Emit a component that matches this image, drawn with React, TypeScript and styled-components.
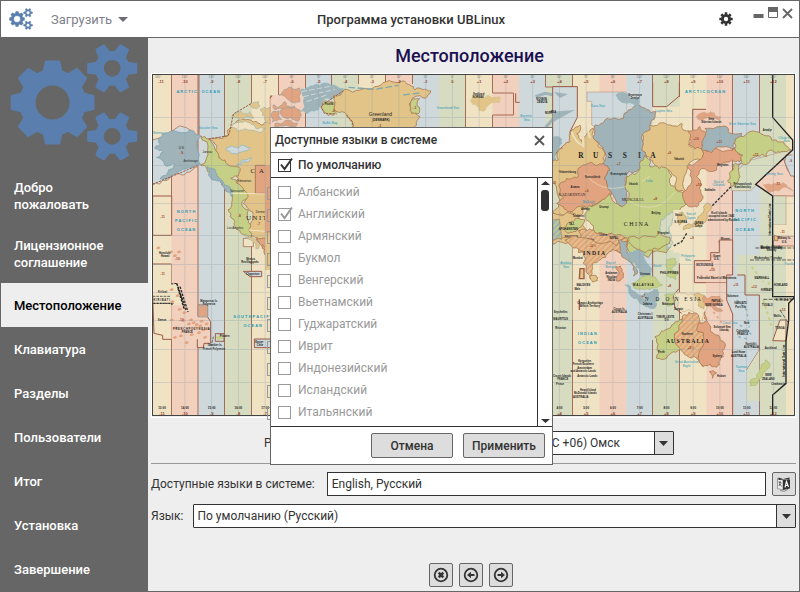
import React, { useState } from 'react';
import styled, { createGlobalStyle, css } from 'styled-components';

const ink = '#333333';
const frame = '#666666';
const panel = '#eeeeee';
const control = '#dddddd';
const steel = '#5a7fae';

const GlobalStyle = createGlobalStyle`
  *, *::before, *::after { box-sizing: border-box; }
  body { margin: 0; background: ${panel}; }
  body, button, input, select {
    font-family: Roboto, "Noto Sans", "Liberation Sans", sans-serif;
    font-size: 12px;
    color: ${ink};
  }
  button { padding: 0; cursor: pointer; }
`;

/* ---------- gears ---------- */

function gearPath(cx: number, cy: number, teeth: number, outer: number, root: number, hole: number, top: number, base: number, turn = 0) {
  const at = (r: number, deg: number) => {
    const a = ((deg + turn) * Math.PI) / 180;
    return `${(cx + r * Math.cos(a)).toFixed(2)} ${(cy + r * Math.sin(a)).toFixed(2)}`;
  };
  let d = '';
  for (let i = 0; i < teeth; i++) {
    const m = (360 / teeth) * i;
    d += `${i ? `A${root} ${root} 0 0 1 ` : 'M'}${at(root, m - base)}L${at(outer, m - top)}L${at(outer, m + top)}L${at(root, m + base)}`;
  }
  d += `A${root} ${root} 0 0 1 ${at(root, -base)}Z`;
  d += `M${cx - hole} ${cy}a${hole} ${hole} 0 1 0 ${hole * 2} 0a${hole} ${hole} 0 1 0 ${-hole * 2} 0Z`;
  return d;
}

const Gears = ({ width, height }: { width: number; height: number }) => (
  <svg width={width} height={height} viewBox="9 43 130 119" aria-hidden="true">
    <g fill={steel} stroke={steel} strokeWidth="2.4" strokeLinejoin="round" fillRule="evenodd">
      <path d={gearPath(52.6, 102.5, 8, 41.2, 32, 18.2, 9, 16)} />
      <path d={gearPath(112.2, 68.3, 6, 24.2, 16.2, 9.6, 10, 19)} />
      <path d={gearPath(112.2, 136.4, 6, 24.2, 16.2, 9.6, 10, 19)} />
    </g>
  </svg>
);

/* ---------- time zone map ---------- */

const sea = { beige: '#f0e3c4', pink: '#f1d0bd', blue: '#cfd9db', green: '#d7dcc0' };
const land = { gold: '#e2c488', orange: '#e2a480', slate: '#9fb3b9', green: '#c5cf85' };
const rust = '#9a5a45';
const aqua = '#2a9bb5';

type Pt = [number, number];

function jag(a: Pt, b: Pt, depth: number): Pt[] {
  const dx = b[0] - a[0];
  const dy = b[1] - a[1];
  if (depth === 0 || Math.hypot(dx, dy) < 9) return [b];
  const seed = Math.sin((a[0] + b[0]) * 12.9898 + (a[1] + b[1]) * 78.233) * 43758.5453;
  const k = (seed - Math.floor(seed) - 0.5) * 0.5;
  const flip = dx + dy * 0.37 > 0 ? 1 : -1;
  const m: Pt = [(a[0] + b[0]) / 2 - dy * k * flip, (a[1] + b[1]) / 2 + dx * k * flip];
  return [...jag(a, m, depth - 1), ...jag(m, b, depth - 1)];
}

function coast(text: string) {
  const pts = text.trim().split(/\s+/).map((p) => p.split(',').map(Number) as Pt);
  const out: Pt[] = [pts[0]];
  pts.forEach((p, i) => out.push(...jag(p, pts[(i + 1) % pts.length], 3)));
  return 'M' + out.map((p) => `${p[0].toFixed(1)} ${p[1].toFixed(1)}`).join('L') + 'Z';
}

const Land = ({ c, p, edge = '#a87850' }: { c: string; p: string; edge?: string }) => (
  <path d={coast(p)} fill={c} stroke={edge} strokeWidth="2.4" strokeLinejoin="round" />
);

const Tile = ({ x, y, children }: { x: number; y: number; children: React.ReactNode }) => (
  <g transform={`translate(${x} ${y}) scale(0.33333)`}>{children}</g>
);

type Label = [number, number, string];

const Labels = ({ items, fill = '#222', size = 12, serif = false, light = false }: { items: Label[]; fill?: string; size?: number; serif?: boolean; light?: boolean }) => (
  <g
    fill={fill}
    fontSize={size}
    fontWeight={light ? 400 : 700}
    textAnchor="middle"
    fontFamily={serif ? '"Liberation Serif", serif' : '"Liberation Sans", sans-serif'}
  >
    {items.map(([x, y, t]) => (
      <text key={`${x}-${y}`} x={x} y={y}>{t}</text>
    ))}
  </g>
);

const bandColors = [sea.pink, sea.blue, sea.green, sea.beige];
const bands = Array.from({ length: 23 }, (_, i) => ({ x: 171.5 + i * 26.75, c: bandColors[i % 4], hour: i - 10 }));

const MapSvg = styled.svg`
  display: block;
  width: 100%;
  height: auto;
  overflow: visible;
`;

const WorldMap = () => (
  <MapSvg viewBox="152 74 643 343" role="img" aria-label="Карта часовых поясов">
    <defs>
      <pattern id="half" width="12" height="12" patternUnits="userSpaceOnUse" patternTransform="rotate(45)">
        <rect width="12" height="12" fill={land.orange} />
        <rect width="5" height="12" fill={land.gold} />
      </pattern>
      <pattern id="halfBlue" width="12" height="12" patternUnits="userSpaceOnUse" patternTransform="rotate(45)">
        <rect width="12" height="12" fill={land.slate} />
        <rect width="5" height="12" fill={land.green} />
      </pattern>
      <clipPath id="sheet"><rect x="152" y="74" width="643" height="342" /></clipPath>
    </defs>
    <g clipPath="url(#sheet)">
      <rect x="152" y="74" width="643" height="342" fill={sea.beige} />
      {bands.map((b) => <rect key={b.x} x={b.x} y="74" width="27" height="342" fill={b.c} />)}
      <rect x="786" y="74" width="9" height="342" fill={sea.beige} />

      <g stroke={rust} strokeWidth="1" opacity="0.85">
        <path d="M171.5 74V196M171.5 264V416M198 74V416M199 74V135M224.500 74V416M251.500 74V104M251.500 235V416" fill="none" />
        <path d="M572.500 74V87M572.500 244V416M679.500 74V97M652.500 340V416M732.500 74V275M759.500 74V137M759.500 348V416M679.500 265V416M652.500 74V106" fill="none" />
        <path d="M278.500 74V96H270M305.500 74V127M331.500 74V88M358.500 74V84M385.500 74V84M412.500 74V84M465.500 74V127M492.500 74V93H513.500V115H492.500V127M545.500 74V87H572" fill="none" />
      </g>

      {/* north-west America and the eastern Pacific */}
      <Tile x={150} y={70}>
        <path d="M8 378H65V496H8Z" fill={sea.beige} stroke={rust} strokeWidth="3" />
        <Land c={sea.blue} p="8,210 140,196 142,290 90,312 45,332 8,342" />
        <Land c={land.slate} edge="#7ba3b2" p="25,207 40,190 65,183 90,188 140,195 152,200 152,285 130,290 100,298 65,316 30,325 55,300 75,284 45,286 35,270 20,262 40,246 15,236 30,224" />
        <Land c={land.gold} p="175,207 215,205 235,195 250,162 300,150 335,165 372,150 372,540 345,540 320,515 300,490 295,470 295,415 280,400 290,385 262,340 240,290 200,245" />
        <Land c={land.green} p="152,197 175,207 190,225 200,245 225,270 240,288 265,290 265,318 242,325 270,345 290,385 275,400 295,420 295,480 305,500 285,495 255,470 240,440 245,400 245,370 215,345 195,315 170,295 152,285" />
        <Land c={land.slate} edge="#7ba3b2" p="172,290 195,298 215,330 240,352 245,380 222,352 195,330" />
        <Land c={land.gold} edge="#a8b9a8" p="245,142 262,124 300,125 310,145 270,152" />
        <Land c={land.gold} edge="#a8b9a8" p="300,100 325,95 330,108 310,115" />
        <Land c={land.gold} edge="#a8b9a8" p="330,118 372,112 372,170 345,150" />
        <Land c={sea.blue} edge="#8fb7ba" p="228,238 262,234 284,228 300,232 276,246 245,252" />
        <Land c={sea.blue} edge="#8fb7ba" p="258,285 275,270 305,262 296,275 268,284" />
        <Land c={sea.beige} edge="#a8b9a8" p="245,168 300,158 345,175 300,180 262,182" />
        <path d="M316 286H372V370H316Z" fill={land.orange} stroke={rust} strokeWidth="2" />
        <path d="M361 80H372V163H361Z" fill={sea.pink} stroke={rust} strokeWidth="3" />
        <path d="M245 370L361 372M295 480L345 484" stroke="#f4e5c5" strokeWidth="3" fill="none" />
        <path d="M8 343L142 287M176 207L235 197L240 180L250 132L305 100" stroke={rust} strokeWidth="3" strokeDasharray="7 3" fill="none" />
        <path d="M280 505H310V530H280Z" fill={sea.beige} stroke={rust} strokeWidth="2" />
        <Land c={land.orange} p="335,515 350,505 372,520 372,540 345,540" />
        <Labels fill={aqua} size={12} items={[[110, 68, 'A R C T I C'], [182, 68, 'O C E A N'], [108, 428, 'N O R T H'], [108, 455, 'P A C I F I C'], [108, 482, 'O C E A N']]} />
        <Labels fill={aqua} size={10} light items={[[174, 178, 'Beaufort Sea'], [24, 192, 'Bering']]} />
        <Labels size={9} light items={[[95, 236, 'U.S.'], [122, 275, 'Anchorage'], [172, 250, 'Juneau'], [283, 335, 'Edmonton'], [262, 367, 'Vancouver'], [255, 478, 'Los Angeles'], [332, 430, 'Denver']]} />
        <Labels size={20} serif light items={[[308, 309, 'C'], [334, 309, 'A'], [328, 449, 'U N I T E']]} />
        <Labels size={10} fill="#a0482c" items={[[95, 252, '-9'], [38, 443, '-11'], [268, 440, '-8'], [326, 464, '-7']]} />
      </Tile>

      {/* south Pacific */}
      <Tile x={150} y={240}>
        <path d="M8 72H64V132H8Z" fill={sea.beige} stroke="none" />
        <path d="M64 132L80 130L112 220H80L64 190H8" fill={sea.beige} stroke="#222" strokeWidth="3" strokeDasharray="6 3" />
        <path d="M64 192V298H142V323H160L182 310V245L172 230H144V195H64Z" fill={sea.pink} />
        <path d="M8 72H64M8 168L12 280L38 286V298H64M142 298V323H160L162 310H182V245L172 230H144V195H173V230M196 281H222V304H196Z" stroke={rust} strokeWidth="3" fill="none" />
        <path d="M146 197H172V230H146Z" fill={land.orange} stroke={land.slate} strokeWidth="2" />
        <path d="M313 297H372V323H313ZM280 94H335V110H300Z" fill={sea.blue} stroke={rust} strokeWidth="3" />
        <path d="M80 130L108 212M90 140L114 216M84 146L102 206" stroke="#222" strokeWidth="4" strokeDasharray="7 4" />
        <path d="M8 169H60M8 190H72M190 290L184 318" stroke="#222" strokeWidth="2" strokeDasharray="8 3" />
        <g fill={land.orange}>
          {[[20, 22], [58, 34], [82, 34], [70, 45], [60, 147], [78, 165], [62, 183], [84, 206], [98, 216], [95, 240], [118, 238], [126, 246], [135, 252], [112, 250], [146, 256], [156, 268], [168, 264], [60, 238], [72, 262], [88, 286], [105, 306], [70, 290], [120, 282], [142, 276], [160, 290], [150, 242], [130, 262], [165, 250]].map(([x, y]) => (
            <path key={`${x}-${y}`} d={`M${x} ${y}l7 -3l5 5l-6 4l-7 -1z`} />
          ))}
        </g>
        <Land c={land.green} edge={land.green} p="200,290 215,285 218,296 204,300" />
        <Land c={land.gold} edge="#a8b9a8" p="285,-8 308,-8 325,26 318,26" />
        <Land c={land.orange} p="320,-8 372,-8 372,55 345,45 350,22 328,10" />
        <Labels fill={aqua} size={12} items={[[312, 234, 'S O U T H  P A C I F I C'], [308, 260, 'O C E A N']]} />
        <Labels size={8} items={[[44, 42, 'Honolulu'], [46, 52, 'Hawaii'], [177, 185, 'Marquesas Is.'], [177, 194, 'Polynesia'], [38, 158, 'Kiribati'], [36, 243, 'Samoa'], [195, 319, 'Gambier Is.'], [192, 329, 'French Polynesia'], [224, 290, 'Pitcairn'], [308, 105, 'Clipperton'], [302, 60, 'Mexico'], [300, 70, 'Revillagigedo'], [328, 308, 'Easter'], [330, 318, 'Chile'], [124, 269, 'F R E N C H   P O L Y N E S I A'], [112, 280, 'FRANCE'], [35, 184, 'K I R I B A T I']]} />
        <Labels size={10} fill="#a0482c" items={[[38, 104, '-11'], [82, 60, '-10'], [94, 242, '-10']]} />
      </Tile>

      {/* Canadian Arctic, Greenland and the north Atlantic */}
      <Tile x={265} y={70}>
        <path d="M16 88L24 75H107V172H16Z" fill={sea.pink} />
        {['42,75 60,58 104,54 105,95 70,90', '24,105 60,95 90,108 60,118 30,120', '45,125 85,112 105,120 104,150 70,146', '20,130 42,122 50,148 22,156', '30,160 60,152 98,160 90,172 30,172'].map((p) => <Land key={p} c={land.orange} edge="#a8a094" p={p} />)}
        <Land c={land.slate} edge="#8fb7ba" p="107,60 150,44 205,45 235,56 180,85 165,108 125,130 108,124" />
        <path d="M110 65L200 48M115 80L210 58M125 95L185 75" stroke="#cfd9db" strokeWidth="3" strokeDasharray="16 7" />
        <Land c={land.gold} p="205,78 240,58 330,50 400,38 435,45 450,60 497,62 480,85 440,90 440,130 465,140 455,165 445,175 265,175 262,155 245,135 215,125 210,98" />
        <path d="M250 52L330 58L400 46M415 75L470 68" stroke="#7fa9ae" strokeWidth="4" strokeDasharray="20 8" fill="none" />
        <Land c={land.green} p="168,112 185,93 208,98 215,125 205,136 178,126" />
        <Land c={land.green} p="441,90 464,86 462,130 441,130" />
        <Land c={land.gold} edge="#d8c694" p="615,92 650,80 690,84 705,98 672,104 655,124 635,108" />
        <Land c={land.gold} edge="#d8c694" p="682,84 706,82 704,95 690,96" />
        <path d="M245 135L262 155V172M235 62L168 108L178 130L215 132" stroke={rust} strokeWidth="3" strokeDasharray="7 3" fill="none" />
        <path d="M762 36H840V172H762Z" fill={sea.blue} />
        <path d="M752 70V97H764" fill="none" stroke={rust} strokeWidth="3" />
        <path d="M812 80L840 70L864 74M842 172L870 140" stroke={land.slate} strokeWidth="9" fill="none" />
        <Labels size={15} light items={[[346, 139, 'Greenland']]} />
        <Labels size={9} items={[[348, 153, '(DENMARK)']]} />
        <Labels size={8} items={[[192, 106, 'Pituffik'], [641, 75, 'Svalbard'], [640, 84, 'NORWAY'], [830, 90, 'NOVAYA'], [832, 99, 'ZEMLYA'], [854, 133, 'NORTH']]} />
        <Labels size={10} light fill={aqua} items={[[195, 162, 'Baffin Bay'], [549, 118, 'Greenland Sea'], [783, 141, 'Barents'], [785, 153, 'Sea']]} />
        <Labels size={10} fill="#a0482c" items={[[344, 170, '-3'], [450, 118, '-1'], [205, 125, '-4']]} />
        <path d="M0 285H5V172H0Z" fill={land.gold} />
        <path d="M0 172H16V285H0ZM0 490H16V600H0Z" fill={land.gold} />
        <path d="M0 285H16V490H0Z" fill={land.orange} />
      </Tile>

      {/* Asia */}
      <Tile x={550} y={70}>
        <path d="M8 50H82V142L60 185V215L25 240L8 265Z" fill={sea.blue} stroke={rust} strokeWidth="3" />
        <path d="M111 66H230V200H135V172L125 165V94H111Z" fill={sea.blue} stroke={rust} strokeWidth="1" />
        <path d="M230 38H308V110H318V180H230Z" fill={sea.blue} />
        <path d="M308 110H388V540H308Z" fill={sea.beige} />
        <path d="M308 38V110H350L388 78V38" fill={sea.green} stroke={rust} strokeWidth="3" />
        <path d="M8 125L75 120L20 150L8 158ZM12 66L54 72L30 84" fill={land.slate} />
        <Land c={land.slate} edge="#8fb7ba" p="8,205 26,200 25,240 18,270 8,272" />
        <path d="M388 110H468V182H428V118H388Z" fill={sea.beige} />
        <path d="M428 118H468V182H428Z" fill={sea.pink} />
        <path d="M468 118H428V182" fill="none" stroke={rust} strokeWidth="3" />
        <Land c={land.gold} p="8,275 25,270 25,240 60,215 65,180 90,165 95,215 110,195 130,175 135,210 160,235 165,280 185,330 180,390 85,440 40,435 8,425" />
        <path d="M65 185Q74 215 100 228L98 180L110 172L120 204" stroke="#eadfbe" strokeWidth="6" fill="none" />
        <Land c={land.orange} p="30,340 50,325 85,315 85,295 115,280 160,280 180,300 165,320 185,370 150,395 120,420 60,425 40,410 20,400 40,385 30,365" />
        <Land c={land.gold} p="300,165 340,158 395,160 400,180 420,185 415,225 455,235 450,270 415,290 410,370 380,360 355,300 320,290 290,260 275,240 280,205" />
        <Land c={land.slate} p="135,165 165,150 220,145 235,120 265,105 318,125 300,180 275,200 275,240 290,260 270,295 235,305 225,345 230,410 215,410 185,370 165,320 180,300 160,280 160,240 135,210" />
        <Land c={land.slate} edge="#8fb7ba" p="198,76 225,70 240,84 268,92 266,106 232,100 205,88" />
        <Land c={land.green} p="230,320 270,295 285,255 300,290 355,300 385,365 420,385 400,410 360,430 340,450 350,500 350,548 240,548 185,490 130,480 105,440 150,395 180,370 215,410 230,400" />
        <Land c={land.orange} p="415,185 450,170 470,190 455,225 470,245 520,245 555,235 578,260 570,275 545,270 500,300 440,320 455,345 455,390 430,410 405,400 410,360 410,290 450,270 455,235 418,225" />
        <Land c={land.slate} p="455,215 465,175 530,170 535,185 575,190 570,210 550,220 555,235 485,248 455,235" />
        <Land c={land.orange} edge="#d7a58b" p="440,138 470,130 512,140 505,150 450,150" />
        <path d="M585 275L725 238L602 362H545L540 320L575 290Z" fill={sea.green} stroke={rust} strokeWidth="1" />
        <Land c={land.green} p="555,215 580,200 640,195 665,210 700,215 722,240 700,245 660,240 650,260 600,275 575,280 570,320 545,350 538,310 575,275 578,255 555,235" />
        <path d="M617 343L700 264L712 300L733 322V378H668Z" fill={sea.pink} stroke={rust} strokeWidth="2" />
        <path d="M708 255H735V318H722L704 276Z" fill={sea.blue} stroke={rust} strokeWidth="2" />
        <path d="M728 240L725 300L735 300V200Z" fill={sea.blue} />
        <Land c={land.orange} edge="#d7a58b" p="640,345 680,338 712,352 728,362 690,360 650,358" />
        <Land c={sea.green} edge="#8fb7ba" p="345,440 368,425 370,520 352,540 342,500 330,475" />
        <path d="M370 420H468V548H370Z" fill={sea.beige} />
        <Land c={land.gold} edge="#b9a878" p="455,430 475,400 484,410 472,440 455,466 425,470 400,480 405,466 438,452" />
        <Land c={land.gold} edge="#b9a878" p="382,432 398,426 405,455 388,466" />
        <path d="M543 350L484 410M410 490L395 515L370 528" stroke="#333" strokeWidth="4" strokeDasharray="8 4" fill="none" />
        <Land c={land.gold} p="8,430 60,430 85,440 110,480 85,510 50,512 8,508" />
        <Land c={land.green} p="50,465 80,445 105,450 85,475 45,482" />
        <path d="M8 450L28 448L36 508L8 524Z" fill="url(#halfBlue)" stroke="#a87850" strokeWidth="2" />
        <path d={coast('85,482 130,480 185,490 232,520 230,548 85,548 90,510')} fill="url(#half)" stroke="#a87850" strokeWidth="2.400" />
        <path d="M275 335L300 318M240 395Q320 440 375 365M105 310Q150 370 225 350" stroke="#e9e3bd" strokeWidth="2" fill="none" />
        <path d="M668 378H708V465H668Z" fill={sea.green} stroke={rust} strokeWidth="1" />
        <path d="M668 498H735V528H668Z" fill={sea.pink} stroke={rust} strokeWidth="2" />
        <path d="M668 465H735V498H668Z" fill={sea.beige} />
        <path d="M672 495L684 500V512H674ZM516 526L534 520V536H518Z" fill={land.gold} stroke={rust} strokeWidth="2" />
        <path d="M668 13V142L728 210V240L617 343L668 378V540" stroke="#222" strokeWidth="4" fill="none" />
        <Labels size={22} serif items={[[93, 263, 'R'], [137, 263, 'U'], [180, 263, 'S'], [224, 263, 'S'], [268, 263, 'I'], [309, 263, 'A']]} />
        <Labels size={18} serif light items={[[258, 469, 'C H I N A']]} />
        <Labels size={12} serif light items={[[66, 379, 'KAZAKHSTAN'], [248, 393, 'MONGOLIA']]} />
        <Labels size={8} items={[[255, 79, 'Severnaya'], [255, 88, 'Zemlya'], [484, 151, 'New'], [484, 160, 'Siberian Islands'], [387, 269, 'Yakutsk'], [52, 310, 'Yekaterinburg'], [128, 323, 'Novosibirsk'], [206, 316, 'Krasnoyarsk'], [75, 354, 'Astana'], [250, 345, 'Irkutsk'], [518, 288, 'Magadan'], [480, 362, 'Sakhalin'], [578, 346, 'Petropavlovsk'], [578, 355, 'Kamchatskiy'], [162, 414, 'Urumqi'], [318, 431, 'Beijing'], [106, 421, 'Almaty'], [85, 442, 'Tashkent'], [446, 461, 'JAPAN'], [446, 471, 'Tokyo'], [386, 437, 'Seoul'], [392, 458, 'S. KOREA'], [340, 491, 'Shanghai'], [65, 465, 'TAJ.'], [55, 479, 'AFGHANISTAN'], [64, 505, 'PAKISTAN'], [160, 498, 'Lhasa'], [192, 508, 'NEPAL'], [190, 530, 'Kathmandu'], [122, 512, 'Delhi'], [122, 522, 'INDIA'], [296, 534, 'Guangzhou'], [348, 523, 'Taipei'], [526, 511, 'Minami'], [526, 521, 'Tori Shima'], [508, 432, 'Kuril islands'], [514, 442, 'occupied since 1945'], [518, 452, 'administered by Russia'], [664, 536, 'Monday / Sunday'], [703, 508, 'Midway Is.'], [703, 518, 'U.S.'], [10, 130, 'SEA'], [652, 184, 'Anadyr']]} />
        <Labels size={10} fill={aqua} light items={[[144, 110, 'Kara Sea'], [341, 127, 'Laptev Sea'], [578, 165, 'East Siberian Sea'], [506, 338, 'Sea of'], [506, 349, 'Okhotsk'], [673, 314, 'Bering Sea'], [703, 206, 'Chukchi'], [710, 217, 'Sea'], [298, 336, 'Lake'], [116, 400, 'Balkash'], [423, 434, 'Sea of'], [423, 446, 'Japan']]} />
        <Labels size={12} fill={aqua} items={[[465, 68, 'A R C T I C   O C E A N'], [584, 426, 'N O R T H'], [584, 454, 'P A C I F I C'], [584, 482, 'O C E A N']]} />
        <Labels size={10} fill="#a0482c" items={[[206, 285, '+7'], [358, 252, '+9'], [438, 209, '+10'], [508, 218, '+11'], [617, 257, '+12'], [110, 365, '+6'], [316, 389, '+8'], [446, 347, '+10'], [426, 508, '+9'], [12, 341, '+5'], [132, 535, '+5½'], [684, 345, '-11'], [698, 488, '-11'], [722, 276, '-9']]} />
        <text transform="translate(664 448) rotate(-90)" fontSize="9" fontWeight="700" textAnchor="middle" fontFamily="Liberation Sans">International Date Line</text>
      </Tile>

      {/* south Asia and Australia */}
      <Tile x={550} y={240}>
        <path d="M8 0H68V240H8Z" fill={sea.green} opacity="0.7" />
        <path d="M530 105H585V165H628V330L590 390V483H548V222L530 180Z" fill={sea.blue} />
        <path d="M562 45H628V165H585V105H562Z" fill={sea.green} />
        <path d="M628 165H585V105H562M628 330L590 390" stroke={rust} strokeWidth="3" fill="none" />
        <path d="M628 330V483H590V390Z" fill={sea.green} />
        <path d="M433 62H482V38H508V0H548V105H530V128H433Z" fill={sea.pink} stroke={rust} strokeWidth="3" />
        <path d="M468 128H530V180L548 222V300H468Z" fill={sea.pink} />
        <path d="M530 128V180L548 222V525M628 165V330M388 70V145L370 165L375 205L395 220M308 30V120" fill="none" stroke={rust} strokeWidth="3" />
        <Land c={land.gold} p="8,0 60,-8 70,12 40,8 8,14" />
        <path d={coast('45,0 90,-8 230,-8 232,40 200,30 178,35 148,60 128,85 120,115 100,70 85,28 68,22')} fill="url(#half)" stroke="#a87850" strokeWidth="2.400" />
        <Land c={land.gold} p="120,108 138,106 142,122 128,126" />
        <Land c={land.orange} p="198,80 211,78 211,122 198,122" />
        <Land c={land.slate} p="205,0 232,6 238,45 262,100 250,108 232,60 210,35" />
        <Land c={land.slate} edge="#8fb7ba" p="232,40 262,28 285,42 290,70 305,85 298,108 272,108 255,70 240,62" />
        <Land c={land.green} p="235,-8 360,-8 355,12 325,28 285,38 262,28 245,15" />
        <Land c={land.green} edge="#a9bd88" p="350,60 375,55 372,78 360,90 385,98 378,118 358,112" />
        <Land c={land.slate} edge="#8fb7ba" p="225,135 242,140 262,162 285,182 320,190 318,200 272,192 242,168" />
        <Land c={land.slate} edge="#8fb7ba" p="284,158 322,148 325,182 300,184" />
        <Land c={land.green} edge="#a9bd88" p="245,130 322,122 338,135 300,150 268,148" />
        <Land c={land.green} edge="#a9bd88" p="344,165 374,160 370,190 350,196" />
        <Land c={sea.beige} edge="#d0b98c" p="375,158 430,162 460,170 460,248 430,215 400,215 385,185" />
        <Land c={land.gold} edge="#b9a878" p="432,165 460,165 462,206 445,198" />
        <Land c={land.orange} edge="#c99478" p="462,168 520,182 510,196 490,195 518,212 498,212 470,200" />
        <Land c={land.green} p="315,290 345,270 365,255 397,235 397,330 350,355 320,355" />
        <path d={coast('397,228 440,220 443,275 460,278 460,380 435,350 397,335')} fill="url(#half)" stroke="#a87850" strokeWidth="2.400" />
        <Land c={land.orange} p="443,275 445,250 460,250 465,215 475,250 505,285 525,310 520,350 500,382 460,378 460,278" />
        <Land c={land.orange} p="478,395 500,398 487,415" />
        <Land c={land.green} edge="#a9bd88" p="600,426 628,395 645,360 660,375 640,398 625,425 600,438" />
        <g fill="none" stroke={land.green} strokeWidth="6" strokeDasharray="9 9">
          <path d="M640 180L665 260M645 150L660 125M605 80L640 125" />
        </g>
        <g fill="none" stroke="#8fb7c9" strokeWidth="5" strokeDasharray="8 10">
          <path d="M560 180L590 210L598 262M570 255L612 290M250 35L300 90M565 290L600 300" />
        </g>
        <g fill="none" stroke={land.orange} strokeWidth="5" strokeDasharray="8 9">
          <path d="M490 215L540 280M450 108L545 112M485 45L488 90" />
        </g>
        <path d="M668 302L690 240H708V303Z" fill={sea.beige} stroke={rust} strokeWidth="3" />
        <path d="M88 178V210M90 86H102V116H88Z" stroke={rust} strokeWidth="4" fill={land.gold} />
        <path d="M668 0V170H735M733 172L716 190V240L708 303V430L668 465V525" stroke="#222" strokeWidth="4" fill="none" />
        <path d="M616 24H735M600 60H735M640 178H735M690 210L716 250" stroke="#222" strokeWidth="2" strokeDasharray="12 4" fill="none" />
        <Labels size={17} serif items={[[132, 45, 'I N D I A'], [412, 310, 'A U S T R A L I A']]} />
        <Labels size={16} serif light items={[[290, 184, 'N'], [322, 184, 'D'], [352, 184, 'O'], [380, 184, 'N'], [408, 184, 'E'], [436, 184, 'S I A']]} />
        <Labels size={9} items={[[358, 102, 'PHILIPPINES'], [280, 138, 'M A L A Y S I A']]} />
        <Labels size={8} items={[[100, 138, 'MALDIVES'], [120, 191, 'Chagos Archipelago'], [120, 201, 'British Territory'], [184, 103, 'Andaman'], [184, 113, 'Nicobar'], [184, 123, 'INDIA'], [208, 210, 'Cocos Is.'], [208, 220, 'AUSTRALIA'], [286, 226, 'Christmas I.'], [286, 236, 'AUSTRALIA'], [285, 104, 'Vietnam'], [292, 196, 'Jakarta'], [346, 233, 'TIMOR-LESTE'], [350, 243, 'Dili'], [354, 196, 'Makassar'], [386, 211, 'Darwin'], [412, 286, 'Northern'], [334, 340, 'Perth'], [502, 352, 'Sydney'], [514, 412, 'Hobart'], [498, 187, 'PAPUA'], [492, 197, 'NEW GUINEA'], [516, 264, 'Solomon Sea'], [522, 274, 'Islands'], [548, 170, 'Solomon'], [572, 193, 'VANUATU'], [572, 203, 'Port-Vila'], [590, 253, 'New'], [578, 276, 'Caledonia'], [578, 286, 'FRANCE'], [500, 50, 'Guam'], [500, 60, 'U.S.'], [464, 78, 'MICRONESIA'], [500, 118, 'Federated States of Micronesia'], [566, 340, 'Lord Howe'], [566, 350, 'AUSTRALIA'], [604, 314, 'Norfolk I.'], [604, 324, 'AUSTRALIA'], [662, 328, 'Auckland'], [655, 409, 'NEW'], [655, 419, 'ZEALAND'], [686, 435, 'Chatham Is.'], [104, 366, 'Kerguelen'], [100, 376, 'French Southern'], [104, 387, 'Amsterdam'], [100, 397, 'and Antarctic Lands'], [112, 410, 'Antarctic Lands'], [114, 453, 'Heard Island'], [106, 463, 'McDonald Islands'], [92, 474, 'AUSTRALIA'], [36, 410, 'Crozet Islands'], [38, 420, 'FRANCE'], [30, 434, 'Prince'], [32, 220, 'Seychelles'], [32, 240, 'MAURITIUS'], [32, 266, 'Réunion'], [636, 118, 'MARSHALL'], [650, 152, 'KIRIBATI'], [692, 137, 'HOWLAND'], [652, 198, 'TUVALU'], [682, 230, 'Wallis'], [690, 268, 'TONGA'], [664, 24, 'Monday / Sunday'], [664, 34, 'Sunday'], [654, 58, 'Wednesday / Tuesday'], [702, 182, 'K I R I B A T I'], [83, 58, 'Mumbai'], [82, 150, 'Male']]} />
        <Labels size={10} fill={aqua} light items={[[48, 73, 'Arabian'], [48, 85, 'Sea'], [182, 72, 'Bay of'], [182, 84, 'Bengal'], [414, 52, 'Philippine'], [414, 64, 'Sea'], [322, 80, 'South'], [410, 370, 'Great Australian'], [410, 381, 'Bight'], [574, 384, 'Tasman'], [574, 395, 'Sea'], [540, 252, 'Coral Sea'], [718, 76, 'Pacific']]} />
        <Labels size={12} fill={aqua} items={[[112, 285, 'I N D I A N'], [112, 311, 'O C E A N']]} />
        <Labels size={10} fill="#a0482c" items={[[358, 140, '+8'], [422, 326, '+9½'], [486, 92, '+10'], [558, 137, '+11'], [612, 143, '+12'], [128, 22, '+5½'], [280, 170, '+7'], [698, 212, '+13']]} />
        <text transform="translate(704 362) rotate(-90)" fontSize="9" fontWeight="700" textAnchor="middle" fontFamily="Liberation Sans">International Date Line</text>
      </Tile>

      <g stroke="#8897a5" strokeWidth="1" opacity="0.28">
        {[117, 165, 203, 235, 264, 292, 320, 349, 382].map((y) => <path key={y} d={`M152 ${y}.500H795`} />)}
        {bands.map((b) => <path key={b.x} d={`M${b.x + 13.4} 74V416`} />)}
      </g>
      <Labels size={4} fill="#93402a" items={[[161, 83, '-11'], ...bands.map((b) => [b.x + 13.4, 83, b.hour > 0 ? `+${b.hour}` : `${b.hour}`] as Label)]} />
      <Labels size={3} light fill="#777" items={[[158, 78, '165°'], ...bands.map((b) => [b.x + 13.4, 78, `${Math.abs(b.hour * 15)}°`] as Label)]} />
      <Labels size={3} fill="#222" items={[[162, 409, '13:00'], ...bands.map((b) => [b.x + 13.4, 409, `${(b.hour + 24) % 24}:00`] as Label)]} />
      <Labels size={4} fill="#93402a" items={[[162, 415, '-11'], ...bands.map((b) => [b.x + 13.4, 415, b.hour > 0 ? `+${b.hour}` : `${b.hour}`] as Label)]} />
    </g>
    <rect x="152.500" y="74.500" width="642" height="341" fill="none" stroke="#444" strokeWidth="1" />
    <g fill="none" stroke="#999" strokeWidth="1">
      {Array.from({ length: 11 }, (_, i) => <rect key={i} x="267.500" y={187.5 + i * 22} width="12" height="12" />)}
    </g>
  </MapSvg>
);

/* ---------- window ---------- */

const Window = styled.div`
  position: relative;
  display: flex;
  flex-direction: column;
  min-height: 100vh;
  border: 1px solid ${frame};
  background: ${panel};
`;

const TitleBar = styled.header`
  display: grid;
  grid-template-columns: 1fr auto 1fr;
  align-items: center;
  height: 37px;
  padding: 0 6px 0 8px;
  background: #fff;
  border-bottom: 1px solid ${frame};
`;

const TitleStart = styled.div`
  display: flex;
  align-items: center;
  gap: 18px;
`;

const LoadButton = styled.button`
  display: flex;
  align-items: center;
  gap: 6px;
  border: 0;
  background: none;
  color: #807f89;
  font-size: 13px;
`;

const AppTitle = styled.h1`
  margin: 0;
  padding-left: 20px;
  font-size: 13px;
  font-weight: 500;
`;

const TitleEnd = styled.div`
  display: flex;
  align-items: center;
  justify-content: flex-end;
  gap: 19px;
`;

const WindowButtons = styled.div`
  display: flex;
  gap: 4px;
  padding-bottom: 12px;
`;

const BareButton = styled.button`
  display: grid;
  place-items: center;
  border: 0;
  background: none;
`;

const Body = styled.div`
  display: flex;
  flex: 1;
`;

const Sidebar = styled.nav`
  display: flex;
  flex-direction: column;
  flex: 0 0 147px;
  min-width: 0;
  background: ${frame};
`;

const Brand = styled.div`
  height: 129px;
  padding: 5px 0 0 8px;
`;

const Step = styled.button<{ $current?: boolean }>`
  min-height: 44px;
  padding: 12px 24px 12px 13px;
  border: 0;
  background: ${(p) => (p.$current ? panel : 'transparent')};
  color: ${(p) => (p.$current ? '#000' : '#fff')};
  font-size: 13px;
  font-weight: 500;
  line-height: 17px;
  text-align: left;
`;

const Main = styled.main`
  display: flex;
  flex-direction: column;
  flex: 1;
  min-width: 0;
  padding: 0 3px 4px;
`;

const Heading = styled.h2`
  margin: 0;
  padding: 0 8px 0 0;
  color: #1b1050;
  font-size: 18px;
  font-weight: 500;
  line-height: 35px;
  text-align: center;
`;

const MapFrame = styled.div`
  border: 1px solid #fff;
`;

const ZoneRow = styled.div`
  display: flex;
  align-items: center;
  justify-content: center;
  gap: 8px;
  margin: 13px 0 8px;
  padding-right: 9px;
`;

const Fields = styled.div`
  display: flex;
  flex-direction: column;
  gap: 8px;
  padding-top: 8px;
  border-top: 1px solid #999;
`;

const FieldRow = styled.div`
  display: flex;
  align-items: center;
`;

const FieldLabel = styled.label<{ $space?: number }>`
  margin-right: ${(p) => p.$space ?? 0}px;
  white-space: nowrap;
`;

const TextBox = styled.input`
  flex: 1;
  min-width: 0;
  height: 24px;
  margin-right: 6px;
  padding: 0 4px;
  border: 1px solid ${ink};
  background: #fff;
`;

const SelectBox = styled.div<{ $width?: number }>`
  display: flex;
  height: 24px;
  border: 1px solid ${ink};
  border-radius: 1px;
  background: #fff;
  ${(p) => (p.$width ? css`flex: 0 0 ${p.$width}px;` : css`flex: 1;`)}

  select {
    flex: 1;
    min-width: 0;
    padding: 0 3px;
    border: 0;
    appearance: none;
    background: none;
  }
`;

const SelectArrow = styled.span`
  display: grid;
  place-items: center;
  flex: 0 0 19px;
  border-left: 1px solid ${ink};
  background: ${control};
  pointer-events: none;
`;

const IconButton = styled.button`
  display: grid;
  place-items: center;
  width: 24px;
  height: 24px;
  border: 1px solid ${frame};
  border-radius: 2px;
  background: ${control};
`;

const Pager = styled.div`
  display: flex;
  justify-content: center;
  gap: 6px;
  margin-top: auto;
  padding-right: 5px;
`;

const Triangle = ({ color = ink, up = false, width = 9, height = 5 }: { color?: string; up?: boolean; width?: number; height?: number }) => (
  <svg width={width} height={height} viewBox="0 0 10 5" preserveAspectRatio="none" aria-hidden="true">
    <path d={up ? 'M0 5L5 0L10 5Z' : 'M0 0H10L5 5Z'} fill={color} />
  </svg>
);

const Select = ({ id, value, width }: { id: string; value: string; width?: number }) => (
  <SelectBox $width={width}>
    <select id={id} defaultValue={value}><option>{value}</option></select>
    <SelectArrow><Triangle /></SelectArrow>
  </SelectBox>
);

/* ---------- language dialog ---------- */

const Dialog = styled.section`
  position: absolute;
  top: 126px;
  left: 269px;
  width: 283px;
  border: 1px solid ${frame};
  background: #fff;
`;

const DialogTitle = styled.div`
  display: flex;
  align-items: center;
  justify-content: space-between;
  height: 25px;
  padding: 0 7px 0 4px;
  border-bottom: 1px solid ${frame};

  h3 { margin: 0; font-size: 12px; font-weight: 500; }
`;

const DefaultRow = styled.div`
  display: flex;
  align-items: center;
  height: 25px;
  padding-left: 7px;
  border-bottom: 1px solid ${ink};
`;

const CheckLabel = styled.label<{ $muted?: boolean }>`
  display: flex;
  align-items: center;
  gap: 4px;
  height: 22px;
  color: ${(p) => (p.$muted ? '#999' : ink)};
  font-weight: ${(p) => (p.$muted ? 400 : 500)};
`;

const CheckCell = styled.span`
  display: grid;
  place-items: center start;
  width: 16px;

  > * { grid-area: 1 / 1; }

  input {
    width: 13px;
    height: 13px;
    margin: 0;
    border: 1px solid currentColor;
    appearance: none;
    background: #fff;
    color: inherit;
  }

  svg { pointer-events: none; }
`;

const ListArea = styled.div`
  display: flex;
  height: 249px;
  border-bottom: 1px solid ${ink};
`;

const LanguageList = styled.ul`
  flex: 1;
  margin: 0;
  padding: 3px 0 3px 7px;
  list-style: none;
  overflow: hidden;
`;

const ScrollTrack = styled.div`
  display: flex;
  flex-direction: column;
  align-items: center;
  justify-content: space-between;
  width: 15px;
  padding: 3px 0;
  border-left: 1px solid ${ink};
`;

const ScrollTop = styled.div`
  display: flex;
  flex-direction: column;
  align-items: center;
  gap: 5px;
`;

const ScrollThumb = styled.div`
  width: 8px;
  height: 21px;
  border-radius: 3px;
  background: ${ink};
`;

const DialogFooter = styled.div`
  display: flex;
  justify-content: flex-end;
  gap: 10px;
  padding: 6px 7px;
`;

const DialogButton = styled.button`
  width: 82px;
  height: 25px;
  border: 1px solid ${frame};
  border-radius: 2px;
  background: ${control};
  font-weight: 500;
`;

const Check = ({ text, muted, defaultOn, onToggle }: { text: string; muted?: boolean; defaultOn?: boolean; onToggle?: (on: boolean) => void }) => {
  const [on, setOn] = useState(!!defaultOn);
  return (
    <CheckLabel $muted={muted}>
      <CheckCell>
        <input
          type="checkbox"
          checked={on}
          disabled={muted}
          onChange={() => { setOn(!on); onToggle?.(!on); }}
        />
        {on && (
          <svg width="16" height="16" viewBox="0 0 16 16" aria-hidden="true">
            <path d="M3 7.500L6.500 12L14 1.500" fill="none" stroke="currentColor" strokeWidth="2" />
          </svg>
        )}
      </CheckCell>
      {text}
    </CheckLabel>
  );
};

const Cross = ({ color = '#555', size = 11 }: { color?: string; size?: number }) => (
  <svg width={size} height={size} viewBox="0 0 11 11" aria-hidden="true">
    <path d="M1 1L10 10M10 1L1 10" stroke={color} strokeWidth="1.800" />
  </svg>
);

const Round = ({ children }: { children: React.ReactNode }) => (
  <svg width="16" height="16" viewBox="0 0 16 16" fill="none" stroke={ink} strokeWidth="1.800" aria-hidden="true">
    <circle cx="8" cy="8" r="6.300" />
    {children}
  </svg>
);

const languages = ['Албанский', 'Английский', 'Армянский', 'Букмол', 'Венгерский', 'Вьетнамский', 'Гуджаратский', 'Иврит', 'Индонезийский', 'Исландский', 'Итальянский'];
const steps = ['Добро пожаловать', 'Лицензионное соглашение', 'Местоположение', 'Клавиатура', 'Разделы', 'Пользователи', 'Итог', 'Установка', 'Завершение'];

const LanguageDialog = () => {
  const [locked, setLocked] = useState(true);
  return (
    <Dialog role="dialog" aria-labelledby="languages-title">
      <DialogTitle>
        <h3 id="languages-title">Доступные языки в системе</h3>
        <BareButton aria-label="Закрыть"><Cross /></BareButton>
      </DialogTitle>
      <DefaultRow><Check text="По умолчанию" defaultOn onToggle={setLocked} /></DefaultRow>
      <ListArea>
        <LanguageList>
          {languages.map((name) => (
            <li key={name}><Check text={name} muted={locked} defaultOn={name === 'Английский'} /></li>
          ))}
        </LanguageList>
        <ScrollTrack>
          <ScrollTop><Triangle up height={4} /><ScrollThumb /></ScrollTop>
          <Triangle height={4} />
        </ScrollTrack>
      </ListArea>
      <DialogFooter>
        <DialogButton>Отмена</DialogButton>
        <DialogButton>Применить</DialogButton>
      </DialogFooter>
    </Dialog>
  );
};

export default function App() {
  return (
    <>
      <GlobalStyle />
      <Window>
        <TitleBar>
          <TitleStart>
            <Gears width={24} height={22} />
            <LoadButton>Загрузить<Triangle color="#6f6e78" width={10} /></LoadButton>
          </TitleStart>
          <AppTitle>Программа установки UBLinux</AppTitle>
          <TitleEnd>
            <BareButton aria-label="Настройки">
              <svg width="16" height="16" viewBox="0 0 16 16" aria-hidden="true">
                <path d={gearPath(8, 8, 8, 6.8, 5, 2.2, 11, 14)} fill={ink} fillRule="evenodd" />
              </svg>
            </BareButton>
            <WindowButtons>
              <BareButton aria-label="Свернуть">
                <svg width="11" height="12" viewBox="0 0 11 12"><path d="M0.500 7H10.500V11H0.500Z" fill={frame} /></svg>
              </BareButton>
              <BareButton aria-label="Развернуть">
                <svg width="10" height="12" viewBox="0 0 10 12">
                  <path d="M0.500 1H9.500V10.500H0.500Z" fill="#fff" stroke={frame} />
                  <path d="M0 0H10V5H0Z" fill={frame} />
                </svg>
              </BareButton>
              <BareButton aria-label="Закрыть окно"><Cross color={frame} /></BareButton>
            </WindowButtons>
          </TitleEnd>
        </TitleBar>
        <Body>
          <Sidebar>
            <Brand><Gears width={130} height={119} /></Brand>
            {steps.map((s) => <Step key={s} $current={s === 'Местоположение'}>{s}</Step>)}
          </Sidebar>
          <Main>
            <Heading>Местоположение</Heading>
            <MapFrame><WorldMap /></MapFrame>
            <ZoneRow>
              <FieldLabel htmlFor="region">Регион:</FieldLabel>
              <Select id="region" value="Азия" width={168} />
              <FieldLabel htmlFor="zone">Зона:</FieldLabel>
              <Select id="zone" value="(UTC +06) Омск" width={145} />
            </ZoneRow>
            <Fields>
              <FieldRow>
                <FieldLabel htmlFor="languages" $space={12}>Доступные языки в системе:</FieldLabel>
                <TextBox id="languages" defaultValue="English, Русский" />
                <IconButton aria-label="Выбрать языки">
                  <svg width="16" height="16" viewBox="0 0 16 16" aria-hidden="true">
                    <path d="M1.500 2.500L7 4V14L1.500 12.500Z" fill="#eee" stroke="#777" strokeWidth="0.700" />
                    <path d="M2.500 1.500L7 3L13.500 1.500V3.500H7L2.500 4Z" fill={ink} />
                    <path d="M7 4L14 3.500V12.500L7 14Z" fill={ink} />
                    <path d="M9 11.500L10.500 5.500L12.500 11M9.500 9.500H12" stroke="#fff" strokeWidth="1.100" fill="none" />
                    <path d="M2.500 6L5.500 7M4 5V7L3 10M4 8L5.500 10.500" stroke="#444" strokeWidth="0.800" fill="none" />
                    <path d="M4 14.500Q8 16.500 12 13.500" stroke="#777" strokeWidth="0.800" fill="none" />
                  </svg>
                </IconButton>
              </FieldRow>
              <FieldRow>
                <FieldLabel htmlFor="language" $space={10}>Язык:</FieldLabel>
                <Select id="language" value="По умолчанию (Русский)" />
              </FieldRow>
            </Fields>
            <Pager>
              <IconButton aria-label="Отмена"><Round><path d="M5.700 5.700L10.300 10.300M10.300 5.700L5.700 10.300" strokeWidth="2.600" /></Round></IconButton>
              <IconButton aria-label="Назад"><Round><path d="M11.500 8H6" strokeWidth="2" /><path d="M4 8L8 4.800V11.200Z" fill={ink} stroke="none" /></Round></IconButton>
              <IconButton aria-label="Далее"><Round><path d="M4.500 8H10" strokeWidth="2" /><path d="M12 8L8 4.800V11.200Z" fill={ink} stroke="none" /></Round></IconButton>
            </Pager>
          </Main>
        </Body>
        <LanguageDialog />
      </Window>
    </>
  );
}
